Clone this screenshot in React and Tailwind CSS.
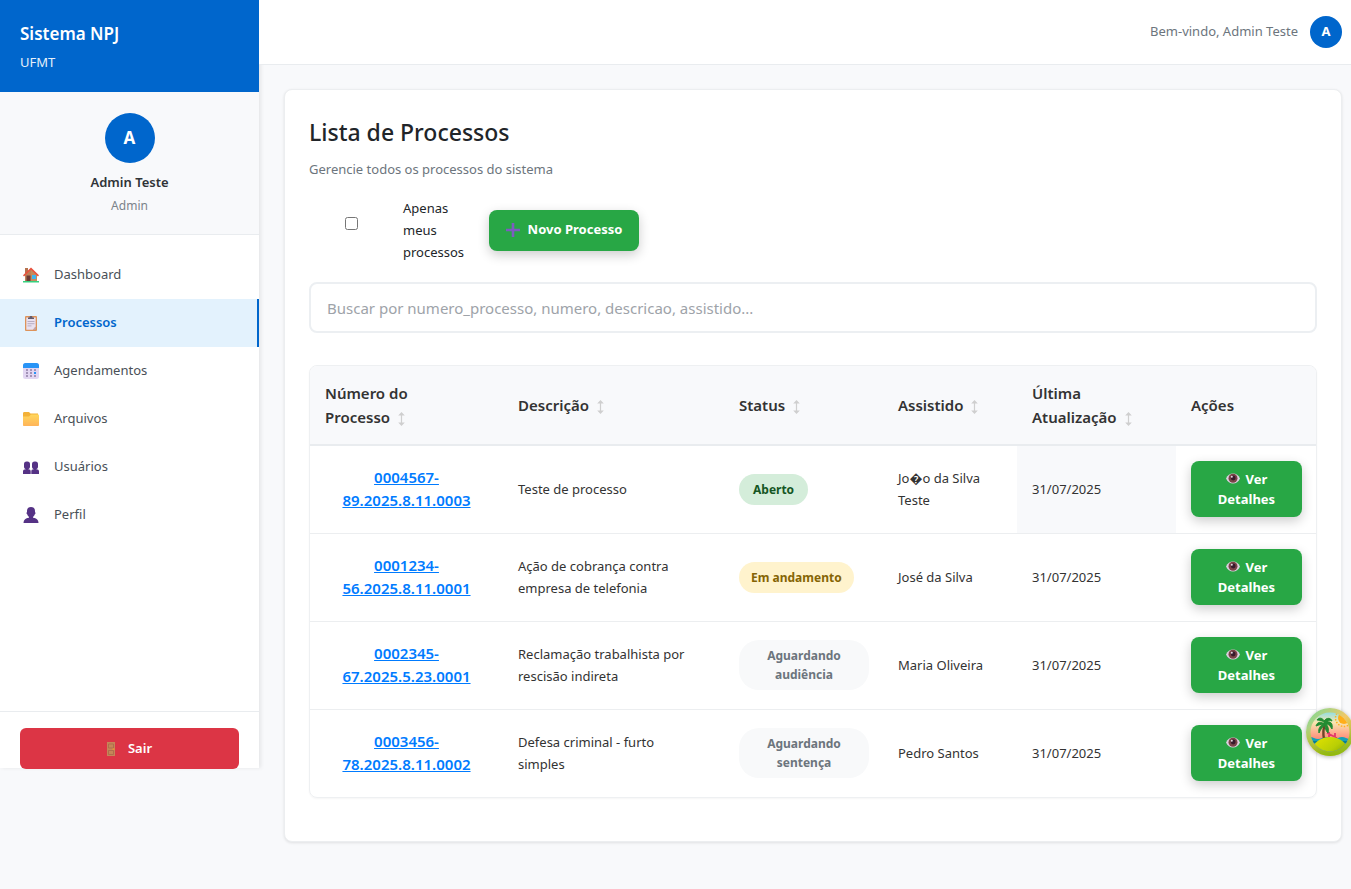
import React from "react";

function HouseIcon() {
  return (
    <svg viewBox="0 0 16 16" className="size-4" aria-hidden="true">
      <path d="M2 1h3v5H2z" fill="#b5734f" />
      <path d="M2 7.500 8 2l6 5.500V15H2z" fill="#c58a5c" />
      <path d="M2 8 8 2.500V15H2z" fill="#b87a55" opacity=".6" />
      <path d="M0 8.200 8 .6l8 7.600-1 1.200L8 2.800 1 9.400z" fill="#e8503c" />
      <path d="M3.500 8.500h4V15h-4z" fill="#6b3a35" />
      <path d="M9 8h4v4H9z" fill="#3fb4ee" />
      <path d="M0 14h16v1.500H0z" fill="#35d07f" />
    </svg>
  );
}

function ClipboardIcon() {
  return (
    <svg viewBox="0 0 16 16" className="size-4" aria-hidden="true">
      <rect x="2" y="1" width="12" height="15" rx="1" fill="#dd935a" />
      <path d="M3.300 2.500h9.400v9l-2.800 3.300H3.300z" fill="#e9e1f0" />
      <path d="M12.700 11.500v3.300H9.900z" fill="#b9aabb" />
      <path d="M5 2.500h1.500C6.500.6 9.500.6 9.500 2.500H11V4H5z" fill="#635b6c" />
      <path d="M4.500 6.500h7M4.500 8.700h7M4.500 10.900h4" stroke="#b3a8bd" strokeWidth=".9" />
    </svg>
  );
}

function CalendarIcon() {
  return (
    <svg viewBox="0 0 16 16" className="size-4" aria-hidden="true">
      <rect x="0" y="0" width="16" height="16" rx="2.500" fill="#e2d6f2" />
      <path d="M0 5V2.500A2.500 2.500 0 0 1 2.500 0h11A2.500 2.500 0 0 1 16 2.500V5z" fill="#2894f6" />
      <g fill="#a394b8">
        <path d="M3 6h2v2H3zM7 6h2v2H7zM11 6h2v2h-2zM3 9h2v2H3zM7 9h2v2H7zM3 12h2v2H3zM7 12h2v2H7zM11 12h2v2h-2z" />
      </g>
      <path d="M11 9h2v2h-2z" fill="#2894f6" />
    </svg>
  );
}

function FolderIcon() {
  return (
    <svg viewBox="0 0 16 16" className="size-4" aria-hidden="true">
      <defs>
        <linearGradient id="folder" x1="0" y1="0" x2="0" y2="1">
          <stop offset="0" stopColor="#ffd75c" />
          <stop offset="1" stopColor="#ffb459" />
        </linearGradient>
      </defs>
      <path d="M0 2.500C0 1.500.5 1 1.500 1H6l1.500 1.500H15V6H0z" fill="#f3b138" />
      <path d="M0 5.500h6L8 3.500h7c.6 0 1 .4 1 1V14c0 .6-.4 1-1 1H1c-.6 0-1-.4-1-1z" fill="url(#folder)" />
    </svg>
  );
}

function UsersIcon() {
  return (
    <svg viewBox="0 0 16 16" className="size-4" aria-hidden="true" fill="#553285">
      <rect x="1" y="2.500" width="6" height="7.500" rx="2.600" />
      <rect x="9" y="2.500" width="6" height="7.500" rx="2.600" />
      <path d="M0 15v-2.500C0 11 1 10.500 2.700 10.300V9h2.600v1.300C7 10.500 7.700 11 7.700 12.500V15zM8.300 15v-2.500c0-1.500.8-2 2.400-2.200V9h2.600v1.300C15 10.500 16 11 16 12.500V15z" />
    </svg>
  );
}

function UserIcon() {
  return (
    <svg viewBox="0 0 16 16" className="size-4" aria-hidden="true" fill="#553285">
      <path d="M8 0c2.700 0 4 1.600 4 4v1.200c.8.300.7 1.800-.2 2C11.400 8.500 10.700 9.300 10 9.800V11H6V9.800C5.300 9.300 4.600 8.500 4.200 7.200c-.9-.2-1-1.700-.2-2V4c0-2.400 1.300-4 4-4z" />
      <path d="M.5 16c0-3.300 2.500-5 5-5.300h5c2.500.3 5 2 5 5.300z" />
    </svg>
  );
}

function DoorIcon() {
  return (
    <svg viewBox="0 0 8 14" className="h-3.5 w-2" aria-hidden="true">
      <path d="M0 0h8v14H0z" fill="#c68558" />
      <path d="M1.500 2h5v4h-5zM1.500 8.500h5v4h-5z" fill="none" stroke="#a86b4a" strokeWidth=".8" />
      <path d="M5.500 6.500h2v1.200h-2z" fill="#f39a2c" />
    </svg>
  );
}

function PlusIcon() {
  return (
    <svg viewBox="0 0 14 14" className="size-3.5" aria-hidden="true">
      <path d="M5.700 0h2.600v5.700H14v2.600H8.300V14H5.700V8.300H0V5.700h5.700z" fill="#7d5cc0" />
    </svg>
  );
}

function EyeIcon() {
  return (
    <svg viewBox="0 0 14 11" className="mr-1.5 inline-block h-[11px] w-3.5 align-baseline" aria-hidden="true">
      <path d="M0 5.500C1.500 2 4 .5 7 .5s5.500 1.500 7 5C12.500 9 10 10.500 7 10.500S1.500 9 0 5.500z" fill="#ddd0e0" />
      <circle cx="7" cy="5.300" r="4.500" fill="#7b4448" />
      <circle cx="7.200" cy="5" r="2.400" fill="#371a2c" />
      <circle cx="5.800" cy="3.800" r="1" fill="#e6d8e4" />
    </svg>
  );
}

function SortIcon() {
  return (
    <svg viewBox="0 0 7 14" className="ml-1 inline-block h-3.5 w-[7px] align-[-3px]" aria-hidden="true">
      <path d="M3.500 0 6.800 3.500H.2zM3.500 14 .2 10.500h6.600z" fill="#cfcfcf" />
      <path d="M3.500 2v10" stroke="#cfcfcf" strokeWidth="1.200" />
    </svg>
  );
}

function IslandIcon() {
  return (
    <svg viewBox="0 0 48 48" className="size-12" aria-hidden="true">
      <defs>
        <linearGradient id="rim" x1="0" y1="0" x2="1" y2="1">
          <stop offset="0" stopColor="#6edb9b" />
          <stop offset=".5" stopColor="#f2c866" />
          <stop offset="1" stopColor="#86bd1c" />
        </linearGradient>
        <linearGradient id="rimShade" x1="0" y1="0" x2="0" y2="1">
          <stop offset=".4" stopColor="#8fc02a" stopOpacity="0" />
          <stop offset="1" stopColor="#8fb80c" />
        </linearGradient>
        <linearGradient id="sky" x1="0" y1="0" x2="0" y2="1">
          <stop offset="0" stopColor="#67daf5" />
          <stop offset=".3" stopColor="#f9e6b0" />
          <stop offset=".65" stopColor="#ff8b78" />
        </linearGradient>
        <linearGradient id="hill" x1="0" y1="0" x2="1" y2="1">
          <stop offset="0" stopColor="#e5e300" />
          <stop offset=".5" stopColor="#b9cf05" />
          <stop offset="1" stopColor="#608a00" />
        </linearGradient>
        <clipPath id="scene">
          <circle cx="24" cy="24" r="19.500" />
        </clipPath>
      </defs>
      <circle cx="24" cy="24" r="24" fill="url(#rim)" />
      <circle cx="24" cy="24" r="24" fill="url(#rimShade)" />
      <g clipPath="url(#scene)">
        <path d="M0 0h48v48H0z" fill="url(#sky)" />
        <circle cx="38" cy="10" r="6" fill="#ffae1b" />
        <circle cx="38" cy="10" r="8.500" fill="none" stroke="#ffae1b" strokeWidth="1.500" strokeDasharray="1.500 1.500" />
        <path d="M0 30q4-2 8 0t8 0 8 0 8 0 8 0 8 0v18H0z" fill="#13a0b8" />
        <path d="M0 34h48" stroke="#087587" strokeWidth="1.500" />
        <path d="m21 25 10 5M23 24v6M29 25v5" stroke="#e2386b" strokeWidth="1.800" />
        <path d="M18 31c-1-5-1-10 1-15" fill="none" stroke="#6e4527" strokeWidth="2.400" />
        <ellipse cx="24" cy="42" rx="17" ry="13" fill="url(#hill)" />
        <path d="M18 16c-3-3-7-2-8 2 3-1 5-2 8-2-4 1-6 5-5 9 2-4 3-6 6-8 0 4 1 6 3 8 1-4 0-7-2-9 3 0 4 2 6 5 1-5-1-8-5-7 1-2 3-2 5-1-1-3-5-4-8 0-1-3-5-4-7-1 3 0 5 1 7 2z" fill="#238b32" stroke="#238b32" strokeWidth="1" />
      </g>
    </svg>
  );
}

const navItems = [
  { label: "Dashboard", Icon: HouseIcon },
  { label: "Processos", Icon: ClipboardIcon, active: true },
  { label: "Agendamentos", Icon: CalendarIcon },
  { label: "Arquivos", Icon: FolderIcon },
  { label: "Usuários", Icon: UsersIcon },
  { label: "Perfil", Icon: UserIcon },
];

const columns = [
  { label: "Número do Processo", width: "w-[193px]", sortable: true },
  { label: "Descrição", width: "w-[221px]", sortable: true },
  { label: "Status", width: "w-[159px]", sortable: true },
  { label: "Assistido", width: "w-[134px]", sortable: true },
  { label: "Última Atualização", width: "w-[159px]", sortable: true },
  { label: "Ações", width: "w-[141px]", sortable: false },
];

const rows = [
  {
    number: "0004567-89.2025.8.11.0003",
    description: "Teste de processo",
    status: "Aberto",
    tone: "px-[14px] bg-[#d4edda] text-[#155724]",
    client: "Jo\uFFFDo da Silva Teste",
    dateCell: "bg-[#f8f9fb]",
  },
  {
    number: "0001234-56.2025.8.11.0001",
    description: "Ação de cobrança contra empresa de telefonia",
    status: "Em andamento",
    tone: "px-3 bg-[#fff3cd] text-[#856404]",
    client: "José da Silva",
  },
  {
    number: "0002345-67.2025.5.23.0001",
    description: "Reclamação trabalhista por rescisão indireta",
    status: "Aguardando audiência",
    tone: "px-[14px] bg-[#f8f9fa] text-[#6c757d]",
    client: "Maria Oliveira",
  },
  {
    number: "0003456-78.2025.8.11.0002",
    description: "Defesa criminal - furto simples",
    status: "Aguardando sentença",
    tone: "px-[14px] bg-[#f8f9fa] text-[#6c757d]",
    client: "Pedro Santos",
  },
];

function Sidebar() {
  return (
    <aside className="flex h-[768px] w-[259px] shrink-0 flex-col bg-white shadow-[2px_0_4px_rgba(0,0,0,0.08)]">
      <div className="flex h-[92px] shrink-0 flex-col gap-1 bg-[#0066cc] px-5 pt-5 text-white">
        <div className="text-[17px] leading-7 font-semibold">Sistema NPJ</div>
        <div className="text-[13px] leading-5 opacity-90">UFMT</div>
      </div>
      <div className="flex flex-col items-center border-b border-[#e9ecef] bg-[#f8f9fb] px-5 pt-[21px] pb-4">
        <div className="flex size-[50px] items-center justify-center rounded-full bg-[#0066cc] text-[17px] font-bold text-white">
          A
        </div>
        <div className="mt-[7px] text-[13px] leading-6 font-semibold text-[#2f3337]">Admin Teste</div>
        <div className="text-[12px] leading-6 text-[#7b838a]">Admin</div>
      </div>
      <nav className="flex grow flex-col pt-4">
        {navItems.map(({ label, Icon, active }) => (
          <a
            key={label}
            href="#"
            aria-current={active ? "page" : undefined}
            className={
              active
                ? "flex h-12 items-center gap-[15px] border-r-2 border-[#0066cc] bg-[#e3f2fd] px-[23px] text-[13px] font-semibold text-[#0066cc]"
                : "flex h-12 items-center gap-[15px] px-[23px] text-[13px] text-[#495057]"
            }
          >
            <Icon />
            {label}
          </a>
        ))}
      </nav>
      <div className="-mb-px border-t border-[#e9ecef] px-5 pt-4">
        <button
          type="button"
          className="flex h-[41px] w-full items-center justify-center gap-[13px] rounded-md bg-[#dc3545] text-[13px] font-semibold text-white"
        >
          <DoorIcon />
          Sair
        </button>
      </div>
    </aside>
  );
}

function HeaderLabel({ label, sortable }) {
  const words = label.split(" ");
  const last = words.pop();
  return (
    <>
      {words.join(" ")}{" "}
      <span className="whitespace-nowrap">
        {last} {sortable && <SortIcon />}
      </span>
    </>
  );
}

function ProcessTable() {
  return (
    <div className="mt-8 overflow-hidden rounded-lg border border-[#eef0f2] shadow-[0_1px_2px_rgba(0,0,0,0.04)]">
      <table className="w-full table-fixed border-collapse text-left text-[#333333]">
        <thead>
          <tr className="h-[79px] border-b-2 border-[#e9ecef] bg-[#f8f9fb]">
            {columns.map(({ label, width, sortable }) => (
              <th key={label} scope="col" className={`${width} px-[15px] text-[15px] leading-6 font-semibold`}>
                <HeaderLabel label={label} sortable={sortable} />
              </th>
            ))}
          </tr>
        </thead>
        <tbody className="text-[13px] leading-[22px]">
          {rows.map((row) => (
            <tr key={row.number} className="h-[88px] border-b border-[#eceef0] last:border-b-0">
              <td className="px-[15px] text-center">
                <a
                  href="#"
                  className="inline-block max-w-[140px] text-[15px] leading-[23px] font-semibold text-[#007bff] underline"
                >
                  {row.number}
                </a>
              </td>
              <td className="pr-8 pl-[15px]">{row.description}</td>
              <td className="pr-[14px] pl-[15px]">
                <span
                  className={`inline-block rounded-[20px] py-1.5 text-center align-middle text-[12px] leading-[19px] font-bold ${row.tone}`}
                >
                  {row.status}
                </span>
              </td>
              <td className="px-[15px]">{row.client}</td>
              <td className={`px-[15px] ${row.dateCell ?? ""}`}>31/07/2025</td>
              <td className="px-[15px]">
                <button
                  type="button"
                  className="block w-full rounded-lg bg-[#28a745] px-5 py-2 text-[13px] leading-[20px] font-bold text-white shadow-[0_4px_12px_rgba(0,0,0,0.2)]"
                >
                  <EyeIcon />
                  Ver Detalhes
                </button>
              </td>
            </tr>
          ))}
        </tbody>
      </table>
    </div>
  );
}

export default function App() {
  return (
    <div className="flex min-h-screen items-start overflow-x-hidden bg-[#f8f9fb] font-['Noto_Sans','Open_Sans',sans-serif] text-[#212529]">
      <Sidebar />
      <div className="flex min-w-0 grow flex-col">
        <header className="flex h-[65px] items-center justify-end gap-3 border-b border-[#e9ecef] bg-white pr-[9px]">
          <span className="text-[13px] text-[#6c757d]">Bem-vindo, Admin Teste</span>
          <div className="flex size-8 items-center justify-center rounded-full bg-[#0066cc] text-[13px] font-bold text-white">
            A
          </div>
        </header>
        <main className="pt-6 pr-[9px] pb-12 pl-[25px]">
          <section className="rounded-lg border border-[#eceef0] bg-white px-6 pt-6 pb-[43px] shadow-[0_1px_3px_rgba(0,0,0,0.1)]">
            <h1 className="text-[23px] leading-9 font-medium">Lista de Processos</h1>
            <p className="mt-2 text-[13px] leading-[22px] text-[#6c757d]">Gerencie todos os processos do sistema</p>
            <div className="mt-[17px] flex items-center">
              <label className="flex w-[180px] text-[13px] leading-[22px]">
                <span className="flex w-[94px] shrink-0 justify-center pt-5 pr-[10px]">
                  <input type="checkbox" className="size-[13px]" />
                </span>
                <span className="w-[70px]">Apenas meus processos</span>
              </label>
              <button
                type="button"
                className="flex h-[41px] w-[150px] items-center justify-center gap-2 rounded-lg bg-[#28a745] text-[13px] font-bold text-white shadow-[0_4px_12px_rgba(0,0,0,0.2)]"
              >
                <PlusIcon />
                Novo Processo
              </button>
            </div>
            <input
              type="text"
              aria-label="Buscar processos"
              placeholder="Buscar por numero_processo, numero, descricao, assistido..."
              className="mt-[19px] block h-[51px] w-full rounded-lg border-2 border-[#eceff2] bg-white px-4 text-[15px] placeholder:text-[#9ea3a9]"
            />
            <ProcessTable />
          </section>
        </main>
      </div>
      <button type="button" aria-label="Ferramentas" className="fixed top-[708px] -right-[3px] rounded-full shadow-[0_1px_4px_rgba(0,0,0,0.3)]">
        <IslandIcon />
      </button>
    </div>
  );
}
